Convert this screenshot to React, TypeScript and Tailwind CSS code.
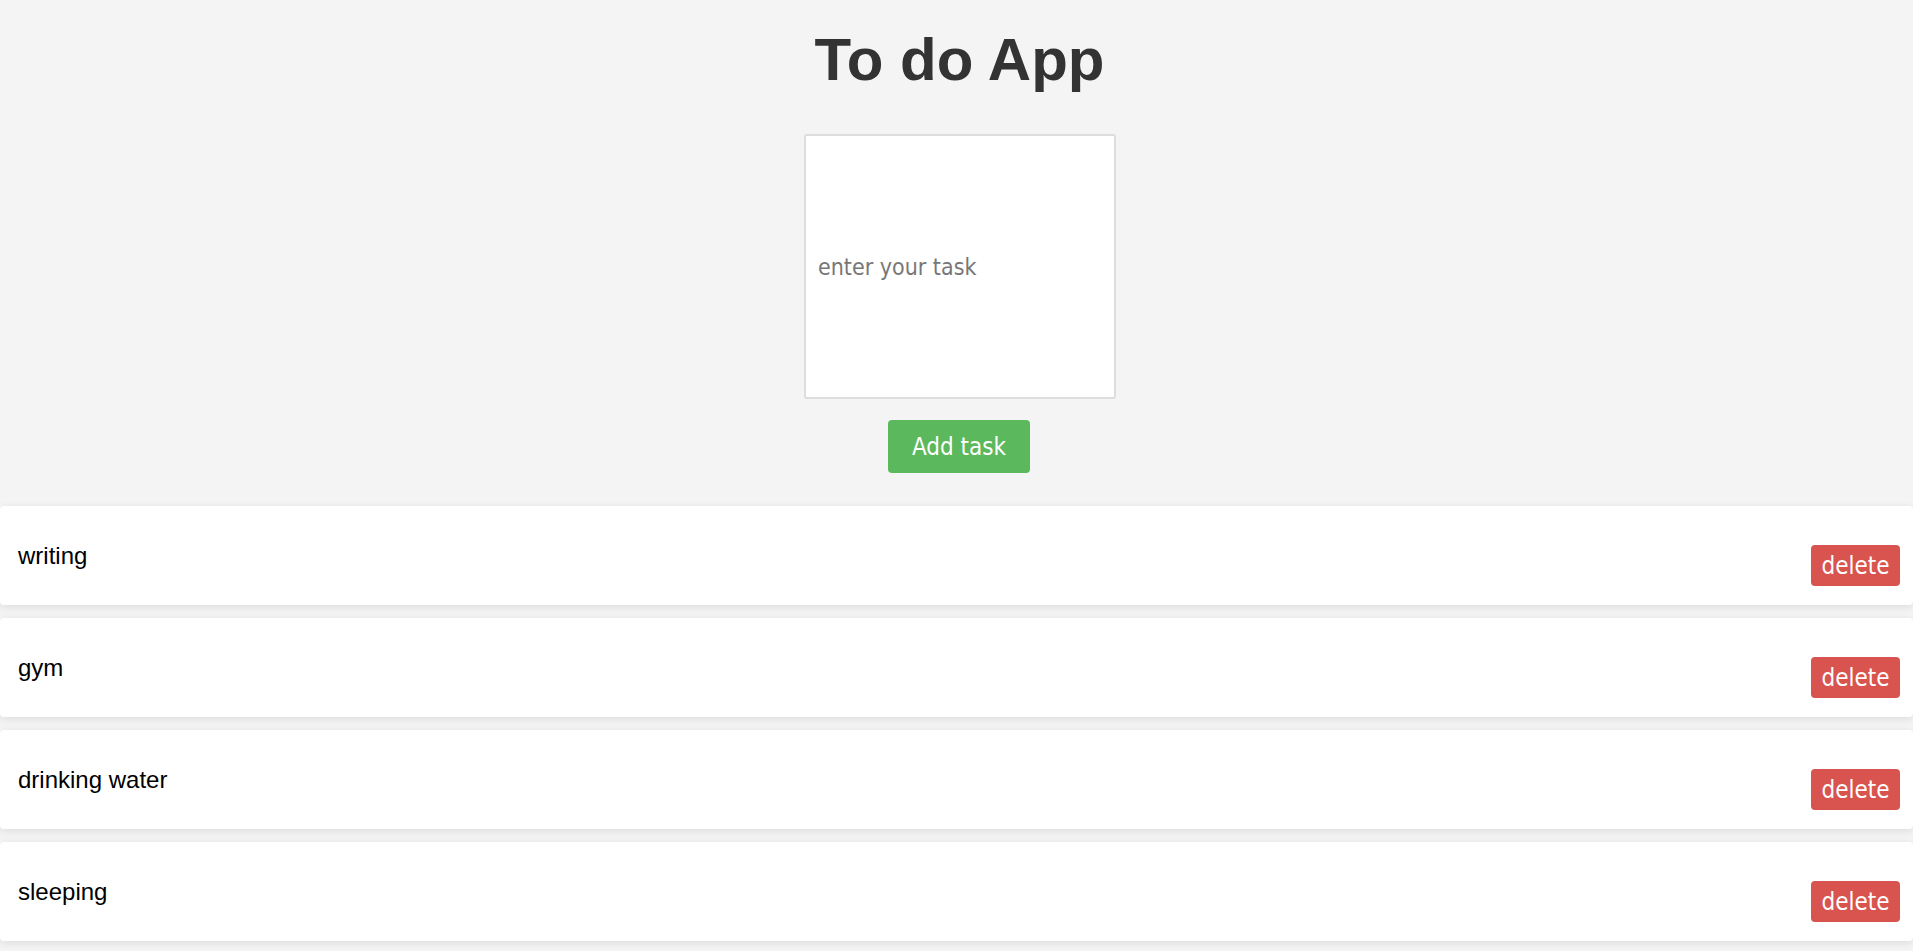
import React, { useState } from 'react';

const initialTasks = ['writing', 'gym', 'drinking water', 'sleeping'];

export default function App() {
  const [tasks, setTasks] = useState<string[]>(initialTasks);
  const [text, setText] = useState('');

  const addTask = () => {
    if (!text.trim()) return;
    setTasks([...tasks, text.trim()]);
    setText('');
  };

  return (
    <div className="min-h-screen bg-[#f4f4f4] pb-[11px] font-['Liberation_Sans',Arial,sans-serif]">
      <h1 className="pt-[25px] pl-[6px] text-center text-[60px] leading-[69px] font-bold text-[#333]">
        To do App
      </h1>

      {/* input + add button */}
      <div className="mt-[40px] flex flex-col items-center">
        <input
          type="text"
          placeholder="enter your task"
          value={text}
          onChange={(e) => setText(e.target.value)}
          className="ml-[7px] h-[265px] w-[312px] rounded-[3px] border-2 border-[#dddddd] bg-white px-[12px] font-['DejaVu_Sans_Condensed','DejaVu_Sans',sans-serif] text-[23px] text-[#333] placeholder:text-[#777] focus:outline-none"
        />
        <button
          onClick={addTask}
          className="mt-[21px] ml-[5px] h-[53px] w-[142px] rounded-[4px] bg-[#5cb85c] font-['DejaVu_Sans_Condensed','DejaVu_Sans',sans-serif] text-[24px] text-white"
        >
          Add task
        </button>
      </div>

      {/* task list */}
      <ul className="mt-[33px] flex flex-col gap-[13px]">
        {tasks.map((t, i) => (
          <li
            key={i}
            className="flex h-[99px] items-center justify-between rounded-[4px] bg-white pr-[13px] pl-[18px] shadow-[0_2px_8px_rgba(0,0,0,0.1)]"
          >
            <span className="text-[24px] text-black">{t}</span>
            <button
              onClick={() => setTasks(tasks.filter((_, j) => j !== i))}
              className="mb-[19px] h-[41px] w-[89px] self-end rounded-[4px] bg-[#d9534f] font-['DejaVu_Sans_Condensed','DejaVu_Sans',sans-serif] text-[24px] text-white"
            >
              delete
            </button>
          </li>
        ))}
      </ul>
    </div>
  );
}
